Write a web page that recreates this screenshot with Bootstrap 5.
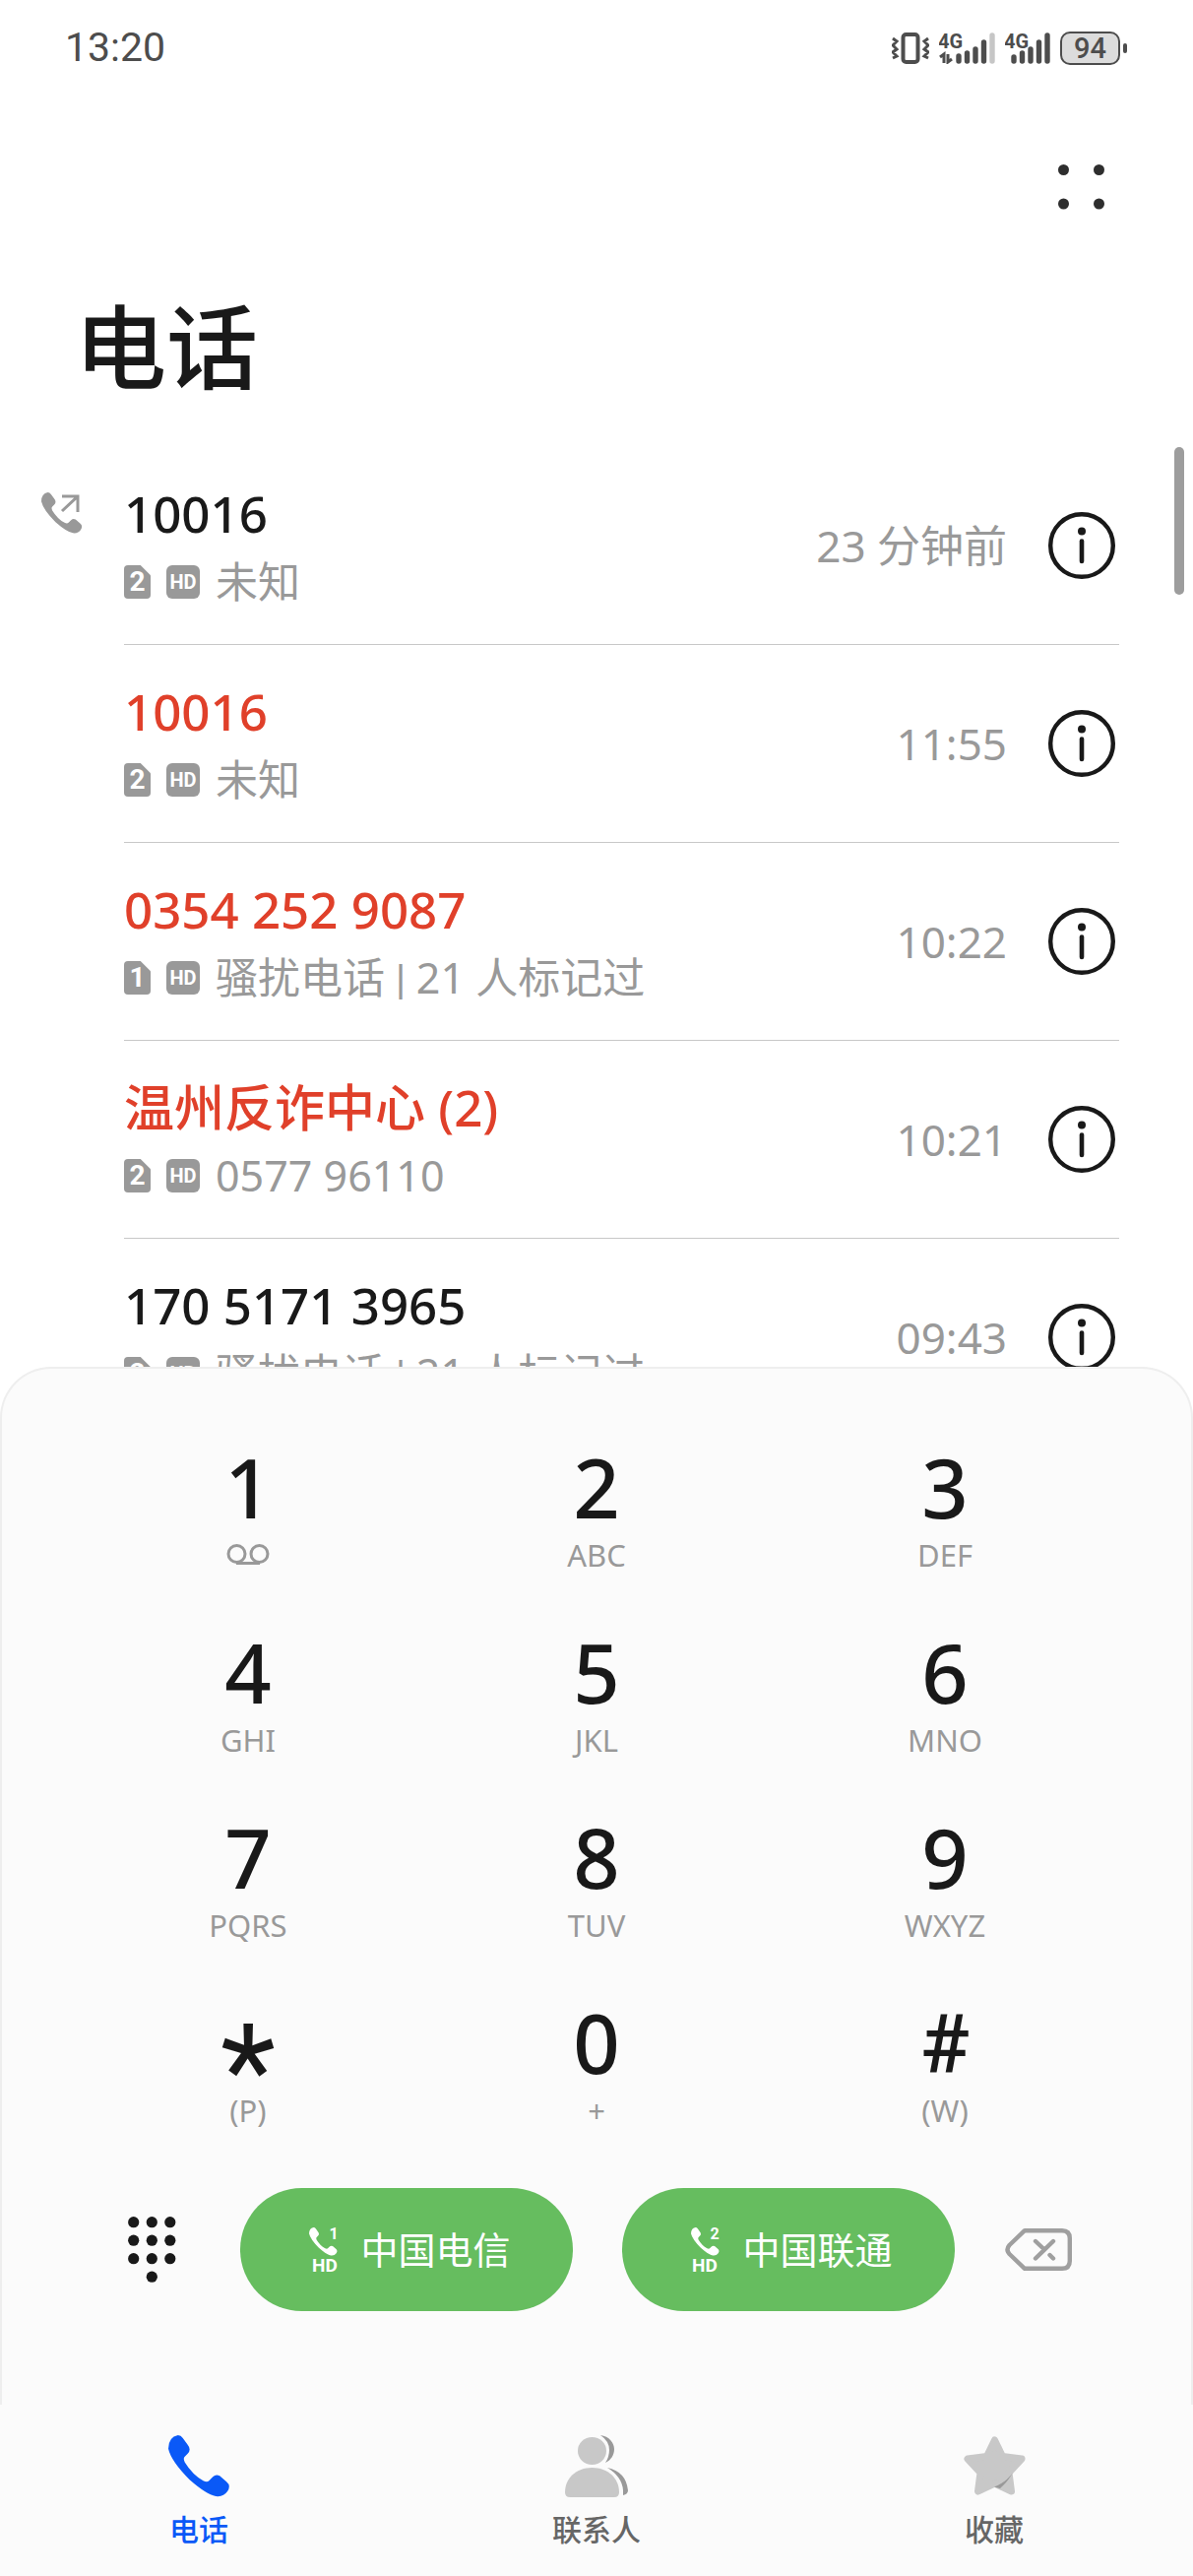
<!DOCTYPE html>
<html lang="zh-CN">
<head>
<meta charset="utf-8">
<meta name="viewport" content="width=device-width, initial-scale=1">
<title>电话</title>
<link rel="stylesheet" href="https://cdn.jsdelivr.net/npm/bootstrap@5.3.0/dist/css/bootstrap.min.css">
<style>
:root{--ink:#191919;--muted:#999;--panel:#fbfbfb;--status:#4d4d4d}
body{font-family:"Noto Sans","Noto Sans CJK SC",sans-serif;color:var(--ink);background:#fff}
svg{display:block;flex:none}
.phone-app{height:100vh}
.statusbar{height:98px;padding:0 67px 0 66px;color:var(--status);font-family:Roboto,sans-serif;font-size:41px;gap:10px}
.statusbar svg text{fill:var(--status)}
.toolbar{height:184px;padding-right:90px}
.plain{border:0;background:none;padding:0;color:inherit}
.page-title{font-size:93px;line-height:140px;font-weight:500;padding-left:76px;margin:0 0 32px}
.call-area{min-height:0}
.gutter{width:126px;padding:46px 0 0 42px;color:var(--muted);flex:none}
.call-body{height:201px;margin-right:75px;border-bottom:1px solid #c8c8c8}
.call-name{font-size:51px;line-height:60px;font-weight:500;margin-bottom:10px}
.missed{color:#e0402a}
.call-sub{font-size:43px;line-height:60px;color:var(--muted);gap:16px}
.bar-sep{font-family:Roboto,sans-serif;white-space:pre}
.sim-chip,.hd-chip{height:34px;background:var(--muted);color:#fff;font-family:Roboto,sans-serif;font-weight:700;text-align:center;line-height:34px}
.sim-chip{width:27px;border-radius:4px;font-size:28px;clip-path:polygon(0 0,62% 0,100% 30%,100% 100%,0 100%)}
.hd-chip{width:34px;border-radius:6px;font-size:20px}
.call-time{font-size:44px;line-height:60px;color:var(--muted)}
.info-btn{margin:0 4px 0 42px}
.thumb{width:10px;height:150px;right:9px;top:0;background:#9d9d9d}
.dialer{background:var(--panel);border:2px solid #eee;border-bottom:0;border-radius:52px 52px 0 0;padding:80px 73px 95px}
.dial-key{height:188px}
.digit{font-size:83px;line-height:80px;height:80px;font-weight:500;margin-bottom:7px}
.digit-star{font-family:Roboto,sans-serif;font-size:130px;line-height:140px;font-weight:400}
.digit-hash{font-family:Roboto,sans-serif;line-height:86px}
.letters{font-size:31px;line-height:44px;color:var(--muted)}
.call-row{padding:0 48px 0 55px}
.sim-btns{gap:50px;margin-left:13px}
.sim-btn{width:338px;height:125px;background:#66bd5f;color:#fff;font-size:38px;gap:22px;border:0;padding:0 0 0 8px}
.tabbar{background:var(--panel);height:174px;padding-top:31px}
.tabbar a{color:#666;font-size:30px;line-height:40px;font-weight:500;text-decoration:none;gap:13px}
.tabbar a.active{color:#0a59f7}
</style>
</head>
<body>
<svg width="0" height="0" class="position-absolute" aria-hidden="true">
  <symbol id="handset" viewBox="0 0 64 64"><path fill="currentColor" d="M10 0Q13 0 15 3L20 10Q24 15 20 19L17 22Q15 24 17 28Q25 41 36 47Q40 49 42 47L46 43Q49 40 53 42L60 48Q65 52 61 58Q57 64 49 63Q39 61 22 46Q3 27 0 14Q0 2 10 0Z"/></symbol>
  <symbol id="info" viewBox="0 0 68 68"><circle cx="34" cy="34" r="31.8" fill="none" stroke="#191919" stroke-width="4.4"/><circle cx="34" cy="19.5" r="4" fill="#191919"/><path d="M34 29.5V50" stroke="#191919" stroke-width="4.6" stroke-linecap="round"/></symbol>
</svg>

<div class="phone-app d-flex flex-column overflow-hidden">
  <div class="statusbar flex-shrink-0 d-flex align-items-center">
    <span class="me-auto">13:20</span>
    <svg width="38" height="32" viewBox="0 0 38 32" fill="none" stroke="#4d4d4d"><rect x="11.500" y="2" width="15" height="28" rx="3" stroke-width="4"/><path d="M1 6l4 3-4 4 4 4-4 3 4 4-4 2M37 6l-4 3 4 4-4 4 4 3-4 4 4 2" stroke-width="3"/></svg>
    <svg width="57" height="32" viewBox="0 0 57 32"><text x="-1" y="16" font-family="Roboto" font-size="20" font-weight="700">4G</text><path d="M1 25l4-3v9M9 22v8l4-3" stroke="#4d4d4d" stroke-width="3" fill="none"/><path d="M20 24v5M28.500 21v8M37 17v12M45.500 10v19" stroke="#4d4d4d" stroke-width="5.400" stroke-linecap="round"/><path d="M54 3v26" stroke="#c6c6c6" stroke-width="5.400" stroke-linecap="round"/></svg>
    <svg width="46" height="32" viewBox="0 0 46 32"><text x="-1" y="16" font-family="Roboto" font-size="20" font-weight="700">4G</text><path d="M9 25v4M17.500 21v8M26 17v12M34.500 10v19M43 3v26" stroke="#4d4d4d" stroke-width="5.400" stroke-linecap="round"/></svg>
    <svg width="68" height="34" viewBox="0 0 68 34"><rect x="1" y="1" width="59" height="32" rx="9" fill="#dcdcdc" stroke="#4d4d4d" stroke-width="2"/><rect x="64" y="12" width="4" height="10" rx="2" fill="#4d4d4d"/><text x="30.500" y="27" text-anchor="middle" font-family="Roboto" font-size="29" font-weight="500">94</text></svg>
  </div>

  <header class="flex-shrink-0">
    <div class="toolbar d-flex align-items-center justify-content-end">
      <button class="plain" aria-label="更多"><svg width="47" height="46" viewBox="0 0 47 46" fill="#2e2e2e"><circle cx="5.500" cy="5.500" r="5.500"/><circle cx="41.500" cy="5.500" r="5.500"/><circle cx="5.500" cy="40" r="5.500"/><circle cx="41.500" cy="40" r="5.500"/></svg></button>
    </div>
    <h1 class="page-title">电话</h1>
  </header>

  <main class="call-area position-relative flex-fill overflow-hidden">
    <ul class="list-unstyled mb-0">
      <li class="d-flex">
        <div class="gutter"><svg width="42" height="42" viewBox="0 0 42 42"><use href="#handset" width="42" height="42"/><path d="M21 4h16v16M37 4L21 19" fill="none" stroke="#999" stroke-width="3"/></svg></div>
        <div class="call-body d-flex align-items-center flex-fill">
          <div class="me-auto mt-1"><div class="call-name">10016</div><div class="call-sub d-flex align-items-center"><span class="sim-chip">2</span><span class="hd-chip">HD</span><span>未知</span></div></div>
          <span class="call-time">23 分钟前</span><button class="plain info-btn" aria-label="详情"><svg width="68" height="68"><use href="#info"/></svg></button>
        </div>
      </li>
      <li class="d-flex">
        <div class="gutter"></div>
        <div class="call-body d-flex align-items-center flex-fill">
          <div class="me-auto mt-1"><div class="call-name missed">10016</div><div class="call-sub d-flex align-items-center"><span class="sim-chip">2</span><span class="hd-chip">HD</span><span>未知</span></div></div>
          <span class="call-time">11:55</span><button class="plain info-btn" aria-label="详情"><svg width="68" height="68"><use href="#info"/></svg></button>
        </div>
      </li>
      <li class="d-flex">
        <div class="gutter"></div>
        <div class="call-body d-flex align-items-center flex-fill">
          <div class="me-auto mt-1"><div class="call-name missed">0354 252 9087</div><div class="call-sub d-flex align-items-center"><span class="sim-chip">1</span><span class="hd-chip">HD</span><span>骚扰电话<span class="bar-sep"> | </span>21 人标记过</span></div></div>
          <span class="call-time">10:22</span><button class="plain info-btn" aria-label="详情"><svg width="68" height="68"><use href="#info"/></svg></button>
        </div>
      </li>
      <li class="d-flex">
        <div class="gutter"></div>
        <div class="call-body d-flex align-items-center flex-fill">
          <div class="me-auto mt-1"><div class="call-name missed">温州反诈中心 (2)</div><div class="call-sub d-flex align-items-center"><span class="sim-chip">2</span><span class="hd-chip">HD</span><span>0577 96110</span></div></div>
          <span class="call-time">10:21</span><button class="plain info-btn" aria-label="详情"><svg width="68" height="68"><use href="#info"/></svg></button>
        </div>
      </li>
      <li class="d-flex">
        <div class="gutter"></div>
        <div class="call-body d-flex align-items-center flex-fill">
          <div class="me-auto mt-1"><div class="call-name">170 5171 3965</div><div class="call-sub d-flex align-items-center"><span class="sim-chip">2</span><span class="hd-chip">HD</span><span>骚扰电话<span class="bar-sep"> | </span>21 人标记过</span></div></div>
          <span class="call-time">09:43</span><button class="plain info-btn" aria-label="详情"><svg width="68" height="68"><use href="#info"/></svg></button>
        </div>
      </li>
    </ul>
    <div class="thumb position-absolute rounded-pill"></div>
  </main>

  <section class="dialer flex-shrink-0" aria-label="拨号键盘">
    <div class="row g-0 text-center">
      <button class="plain col-4 dial-key d-flex flex-column align-items-center"><span class="digit">1</span><span class="letters d-flex align-items-center"><svg width="44" height="44" viewBox="0 0 44 44" fill="none" stroke="#999" stroke-width="3"><circle cx="10.500" cy="21" r="8.500"/><circle cx="33.500" cy="21" r="8.500"/><path d="M10 30.500H34"/></svg></span></button>
      <button class="plain col-4 dial-key d-flex flex-column align-items-center"><span class="digit">2</span><span class="letters">ABC</span></button>
      <button class="plain col-4 dial-key d-flex flex-column align-items-center"><span class="digit">3</span><span class="letters">DEF</span></button>
      <button class="plain col-4 dial-key d-flex flex-column align-items-center"><span class="digit">4</span><span class="letters">GHI</span></button>
      <button class="plain col-4 dial-key d-flex flex-column align-items-center"><span class="digit">5</span><span class="letters">JKL</span></button>
      <button class="plain col-4 dial-key d-flex flex-column align-items-center"><span class="digit">6</span><span class="letters">MNO</span></button>
      <button class="plain col-4 dial-key d-flex flex-column align-items-center"><span class="digit">7</span><span class="letters">PQRS</span></button>
      <button class="plain col-4 dial-key d-flex flex-column align-items-center"><span class="digit">8</span><span class="letters">TUV</span></button>
      <button class="plain col-4 dial-key d-flex flex-column align-items-center"><span class="digit">9</span><span class="letters">WXYZ</span></button>
      <button class="plain col-4 dial-key d-flex flex-column align-items-center"><span class="digit digit-star">*</span><span class="letters">(P)</span></button>
      <button class="plain col-4 dial-key d-flex flex-column align-items-center"><span class="digit">0</span><span class="letters">+</span></button>
      <button class="plain col-4 dial-key d-flex flex-column align-items-center"><span class="digit digit-hash">#</span><span class="letters">(W)</span></button>
    </div>
    <div class="call-row d-flex align-items-center justify-content-between">
      <button class="plain" aria-label="收起键盘"><svg width="49" height="67" viewBox="0 0 49 67" fill="#191919"><circle cx="5.700" cy="5.700" r="5.600"/><circle cx="24.300" cy="5.700" r="5.600"/><circle cx="42.800" cy="5.700" r="5.600"/><circle cx="5.700" cy="24.200" r="5.600"/><circle cx="24.300" cy="24.200" r="5.600"/><circle cx="42.800" cy="24.200" r="5.600"/><circle cx="5.700" cy="42.700" r="5.600"/><circle cx="24.300" cy="42.700" r="5.600"/><circle cx="42.800" cy="42.700" r="5.600"/><circle cx="24.300" cy="61.200" r="5.600"/></svg></button>
      <div class="sim-btns d-flex">
        <button class="sim-btn rounded-pill d-flex align-items-center justify-content-center"><svg width="30" height="46" viewBox="0 0 30 46" fill="#fff"><use href="#handset" width="29" height="29"/><text x="25" y="12" text-anchor="middle" font-family="Roboto" font-size="16" font-weight="700">1</text><text x="16" y="45" text-anchor="middle" font-family="Roboto" font-size="19" font-weight="700">HD</text></svg>中国电信</button>
        <button class="sim-btn rounded-pill d-flex align-items-center justify-content-center"><svg width="30" height="46" viewBox="0 0 30 46" fill="#fff"><use href="#handset" width="29" height="29"/><text x="24" y="12" text-anchor="middle" font-family="Roboto" font-size="16" font-weight="700">2</text><text x="14" y="45" text-anchor="middle" font-family="Roboto" font-size="19" font-weight="700">HD</text></svg>中国联通</button>
      </div>
      <button class="plain" aria-label="删除"><svg width="68" height="43" viewBox="0 0 68 43" fill="none" stroke="#9f9f9f" stroke-width="4.400" stroke-linecap="round" stroke-linejoin="round"><path d="M20 2.200H58Q65.800 2.200 65.800 10V33Q65.800 40.800 58 40.800H20L4.500 26Q0.500 21.500 4.500 17Z"/><path d="M31 13L40 21.500M45.500 27L49 30.500M49 13L31 30.500"/></svg></button>
    </div>
  </section>

  <nav class="tabbar flex-shrink-0 d-flex">
    <a href="#" class="active col-4 d-flex flex-column align-items-center"><svg width="63" height="63"><use href="#handset"/></svg>电话</a>
    <a href="#" class="col-4 d-flex flex-column align-items-center"><svg width="64" height="63" viewBox="0 0 64 63"><path fill="#999" d="M36 0C45 1 50 8 50 14C50 20 47 25 41 28Q45 22 45 15Q45 6 36 0ZM43 33Q62 37 64 56Q64 60 59 61V56Q58 42 43 33Z"/><ellipse cx="27.500" cy="16" rx="14.500" ry="14" fill="#c8c8c8"/><path fill="#c8c8c8" d="M27.500 33C44 33 55 44 55 58Q55 63 50 63H5Q0 63 0 58C0 44 11 33 27.500 33Z"/></svg>联系人</a>
    <a href="#" class="col-4 d-flex flex-column align-items-center"><svg width="63" height="63" viewBox="0 0 63 63"><path fill="#c8c8c8" stroke="#c8c8c8" stroke-width="7" stroke-linejoin="round" d="M31.500 5L39.500 21.500L59 24L46 38L48.500 57L31.500 49L14.500 57L17 38L4 24L23.500 21.500Z"/><path fill="#999" d="M50 38Q45 47 37 54L31 52.500Q43 48 50 38Z"/></svg>收藏</a>
  </nav>
</div>
<script src="https://cdn.jsdelivr.net/npm/bootstrap@5.3.0/dist/js/bootstrap.bundle.min.js"></script>
</body>
</html>
